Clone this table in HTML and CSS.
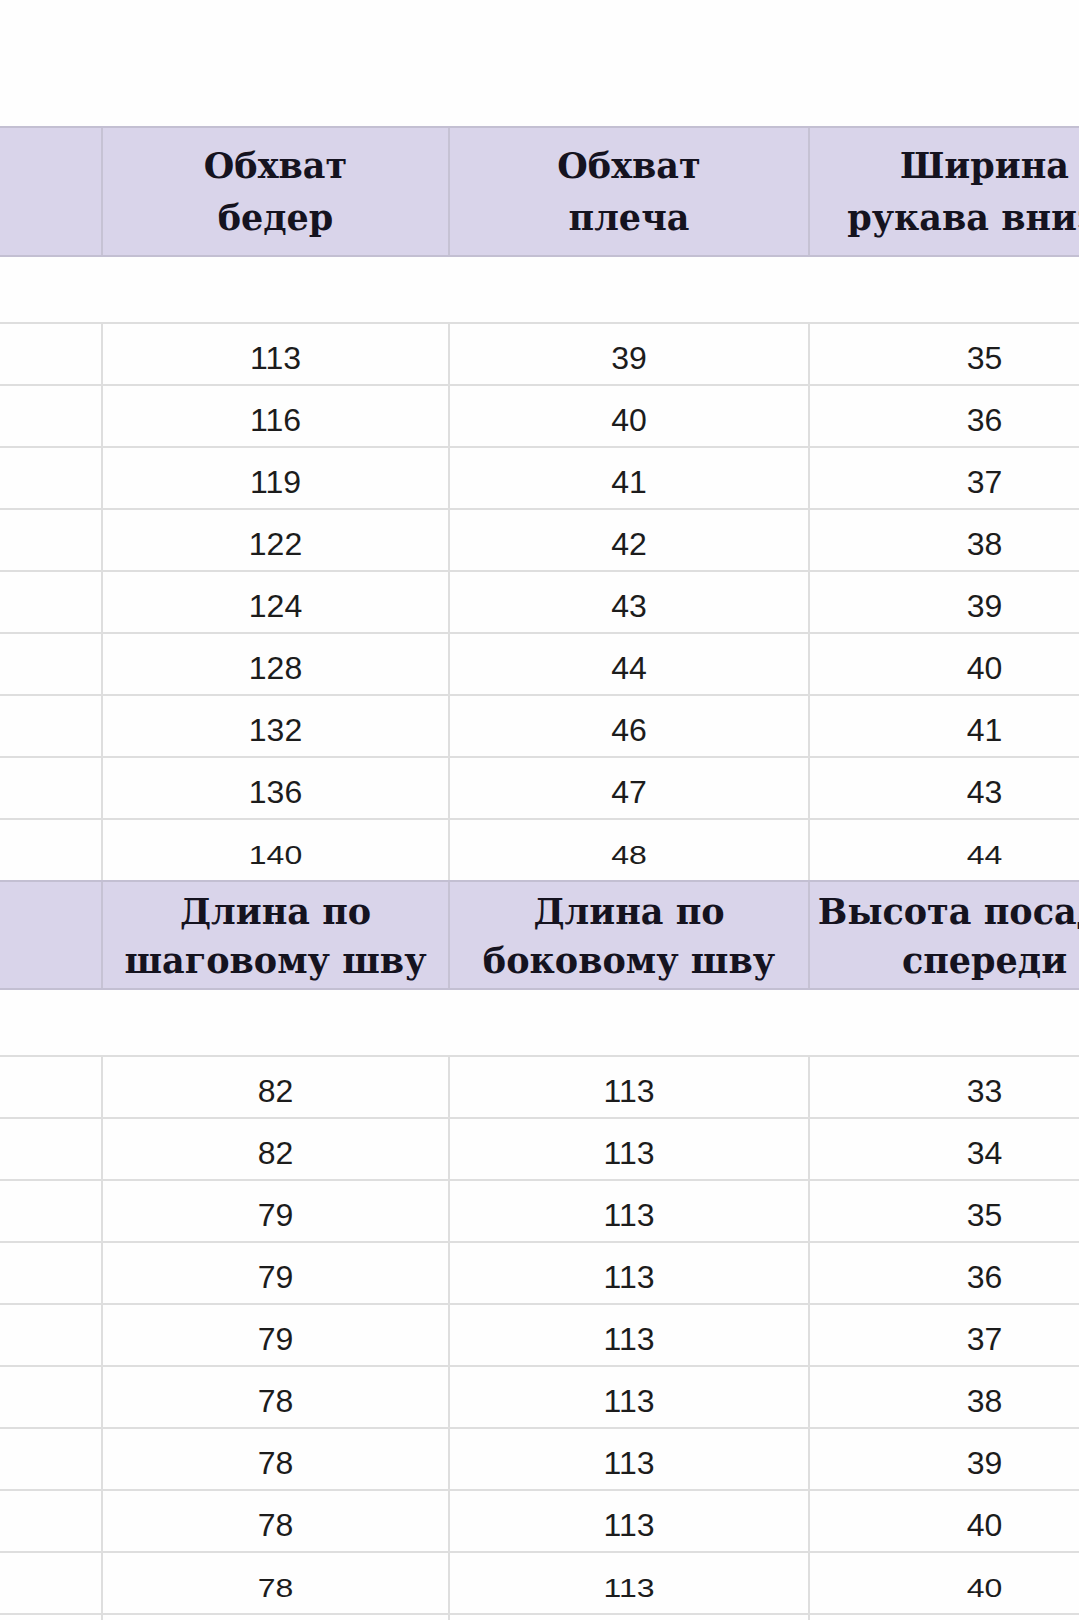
FILE: index.html
```html
<!DOCTYPE html>
<html lang="ru">
<head>
<meta charset="utf-8">
<title>Таблица размеров</title>
<link rel="stylesheet" href="styles.css">
</head>
<body>
<div class="sheet">
  <div class="head head-a">
    <div class="hc"></div>
    <div class="hc">Обхват<br>бедер</div>
    <div class="hc">Обхват<br>плеча</div>
    <div class="hc">Ширина<br>рукава внизу</div>
  </div>
  <div class="gap"></div>
  <div class="row"><div class="c"></div><div class="c">113</div><div class="c">39</div><div class="c">35</div></div>
  <div class="row"><div class="c"></div><div class="c">116</div><div class="c">40</div><div class="c">36</div></div>
  <div class="row"><div class="c"></div><div class="c">119</div><div class="c">41</div><div class="c">37</div></div>
  <div class="row"><div class="c"></div><div class="c">122</div><div class="c">42</div><div class="c">38</div></div>
  <div class="row"><div class="c"></div><div class="c">124</div><div class="c">43</div><div class="c">39</div></div>
  <div class="row"><div class="c"></div><div class="c">128</div><div class="c">44</div><div class="c">40</div></div>
  <div class="row"><div class="c"></div><div class="c">132</div><div class="c">46</div><div class="c">41</div></div>
  <div class="row"><div class="c"></div><div class="c">136</div><div class="c">47</div><div class="c">43</div></div>
  <div class="row row-last"><div class="c"></div><div class="c"><span>140</span></div><div class="c"><span>48</span></div><div class="c"><span>44</span></div></div>

  <div class="head head-b">
    <div class="hc"></div>
    <div class="hc">Длина по<br>шаговому шву</div>
    <div class="hc">Длина по<br>боковому шву</div>
    <div class="hc">Высота посадки<br>спереди</div>
  </div>
  <div class="gap"></div>
  <div class="row"><div class="c"></div><div class="c">82</div><div class="c">113</div><div class="c">33</div></div>
  <div class="row"><div class="c"></div><div class="c">82</div><div class="c">113</div><div class="c">34</div></div>
  <div class="row"><div class="c"></div><div class="c">79</div><div class="c">113</div><div class="c">35</div></div>
  <div class="row"><div class="c"></div><div class="c">79</div><div class="c">113</div><div class="c">36</div></div>
  <div class="row"><div class="c"></div><div class="c">79</div><div class="c">113</div><div class="c">37</div></div>
  <div class="row"><div class="c"></div><div class="c">78</div><div class="c">113</div><div class="c">38</div></div>
  <div class="row"><div class="c"></div><div class="c">78</div><div class="c">113</div><div class="c">39</div></div>
  <div class="row"><div class="c"></div><div class="c">78</div><div class="c">113</div><div class="c">40</div></div>
  <div class="row row-last"><div class="c"></div><div class="c"><span>78</span></div><div class="c"><span>113</span></div><div class="c"><span>40</span></div></div>
  <div class="row"><div class="c"></div><div class="c"></div><div class="c"></div><div class="c"></div></div>
</div>
</body>
</html>
```
FILE: styles.css
```css
html, body {
  margin: 0;
  padding: 0;
  background: #fefefe;
  overflow: hidden;
}
.sheet {
  width: 1159px;
  padding-top: 126px;
}
.head, .row {
  display: grid;
  grid-template-columns: 101px 347px 360px 351px;
}
.head {
  background: #d9d4ea;
  border-top: 2px solid #c3bfd2;
  border-bottom: 2px solid #c3bfd2;
}
.head-a { height: 127px; }
.head-b { height: 106px; }
.hc {
  display: flex;
  align-items: center;
  justify-content: center;
  text-align: center;
  font-family: "DejaVu Serif", "Liberation Serif", serif;
  font-weight: bold;
  font-size: 35px;
  color: #15131f;
  white-space: nowrap;
}
.head-a .hc { line-height: 52px; }
.head-b .hc { line-height: 49px; padding-top: 2px; }
.hc + .hc { border-left: 2px solid #c6c2d4; }
.gap { height: 65px; background: #fefefe; }
.row {
  height: 60px;
  border-top: 2px solid #dedede;
}
.c {
  display: flex;
  align-items: center;
  justify-content: center;
  padding-top: 9px;
  font-family: "Liberation Sans", Arial, sans-serif;
  font-size: 32px;
  color: #1c1c1c;
}
.c + .c { border-left: 2px solid #dedede; }
.row-last .c { padding-top: 10px; }
.row-last .c span { display: inline-block; line-height: 1.2; transform: scaleY(0.82); }
```
